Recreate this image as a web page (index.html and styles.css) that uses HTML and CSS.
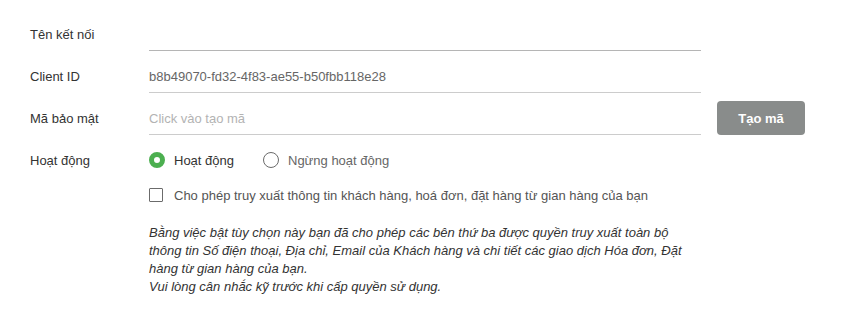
FILE: index.html
```html
<!DOCTYPE html>
<html>
  <head>
    <meta charset="utf-8">
    <title>Kết nối</title>
    <link rel="stylesheet" href="styles.css">
  </head>
  <body>
    <div class="form">
      <div class="row">
        <label class="label">Tên kết nối</label>
        <input class="field field-focus" type="text" value="">
      </div>
      <div class="row">
        <label class="label">Client ID</label>
        <input class="field" type="text" value="b8b49070-fd32-4f83-ae55-b50fbb118e28" readonly>
      </div>
      <div class="row">
        <label class="label">Mã bảo mật</label>
        <input class="field" type="text" placeholder="Click vào tạo mã" readonly>
        <button class="btn">Tạo mã</button>
      </div>
      <div class="row">
        <label class="label">Hoạt động</label>
        <div class="options">
          <span class="radio checked"></span>
          <span class="opt-text dark">Hoạt động</span>
          <span class="radio"></span>
          <span class="opt-text">Ngừng hoạt động</span>
        </div>
      </div>
      <div class="row row-small">
        <span class="label"></span>
        <div class="options">
          <span class="checkbox"></span>
          <span class="opt-text check-text">Cho phép truy xuất thông tin khách hàng, hoá đơn, đặt hàng từ gian hàng của bạn</span>
        </div>
      </div>
      <div class="row row-note">
        <span class="label"></span>
        <p class="note">
          Bằng việc bật tùy chọn này bạn đã cho phép các bên thứ ba được quyền truy xuất toàn bộ thông tin Số điện thoại, Địa chỉ, Email của Khách hàng và chi tiết các giao dịch Hóa đơn, Đặt hàng từ gian hàng của bạn.<br>
          Vui lòng cân nhắc kỹ trước khi cấp quyền sử dụng.
        </p>
      </div>
    </div>
  </body>
</html>
```

FILE: styles.css
```css
body{
	margin:0;
	font-family:"Liberation Sans", Arial, sans-serif;
	font-size:13px;
	color:#333333;
	background:#ffffff;
}

.form{
	padding:17px 0 0 30px;
	display:flex;
	flex-direction:column;
	gap:8px;
}

.row{
	display:flex;
	align-items:center;
	height:34px;
}

.row-small{
	height:20px;
}

.row-note{
	height:auto;
	align-items:flex-start;
	margin-top:11px;
}

.label{
	width:119px;
	flex-shrink:0;
	color:#333333;
}

.field{
	width:552px;
	height:33px;
	box-sizing:border-box;
	border:none;
	border-bottom:1px solid #cccccc;
	padding:0;
	margin:0 0 -1px 0;
	font-family:inherit;
	font-size:13px;
	color:#666666;
	outline:none;
	background:transparent;
}

.field-focus{
	border-bottom-color:#b5b5b5;
}

.field::placeholder{
	color:#b3b3b3;
}

.btn{
	margin-left:16px;
	width:88px;
	height:34px;
	border:none;
	border-radius:4px;
	background:#898c8b;
	color:#ffffff;
	font-family:inherit;
	font-size:13px;
	font-weight:bold;
	padding:0;
}

.options{
	display:flex;
	align-items:center;
}

.radio{
	width:16px;
	height:16px;
	box-sizing:border-box;
	border-radius:50%;
	border:1.5px solid #6b6b6b;
	margin-right:9px;
}

.radio.checked{
	border:5px solid #4caf50;
	background:#ffffff;
}

.opt-text{
	color:#666666;
	margin-right:29px;
}

.opt-text.dark{
	color:#333333;
}

.checkbox{
	width:14px;
	height:14px;
	box-sizing:border-box;
	border:1px solid #6b6b6b;
	border-radius:1px;
	margin-right:11px;
}

.check-text{
	color:#555555;
}

.note{
	margin:0;
	width:552px;
	font-style:italic;
	line-height:18px;
	color:#333333;
}
```
